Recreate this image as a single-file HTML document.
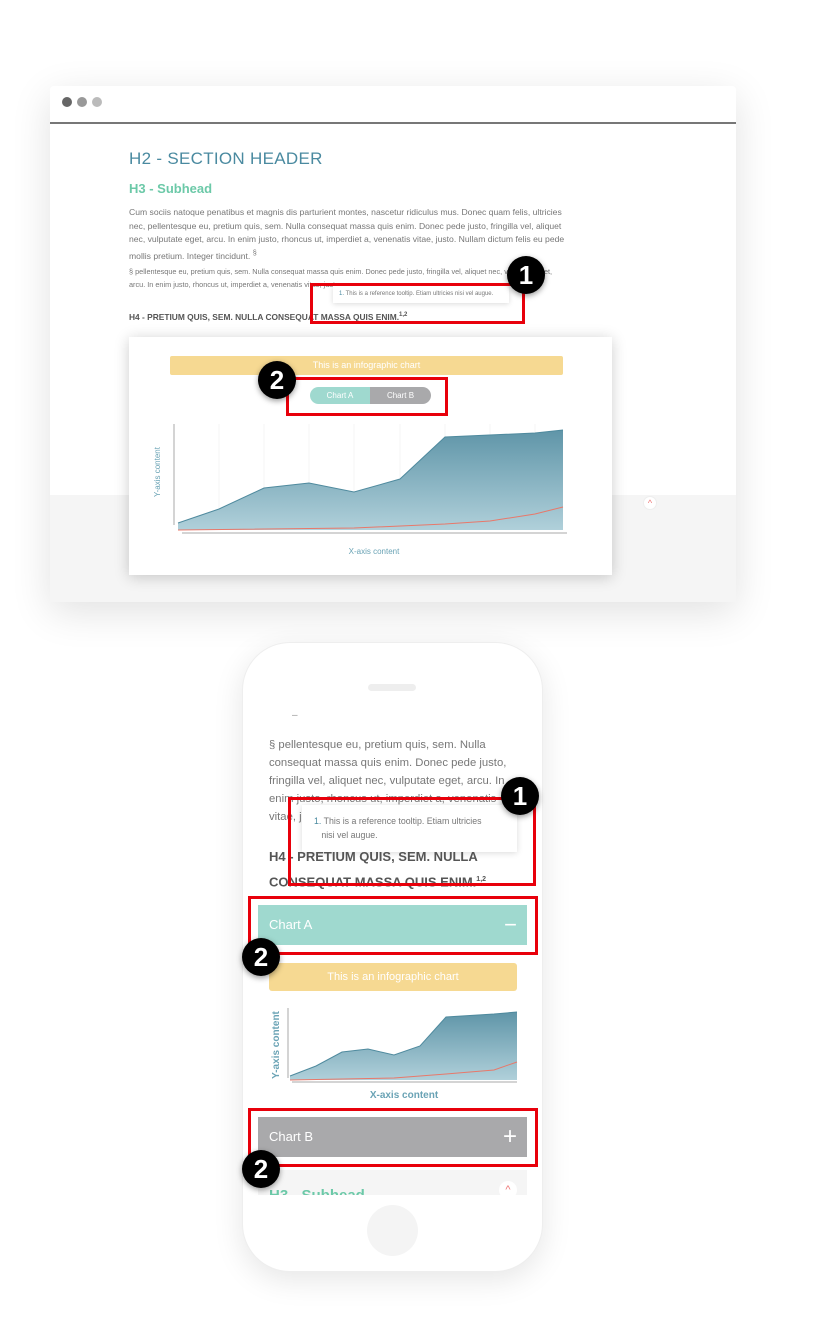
<!DOCTYPE html>
<html><head><meta charset="utf-8"><style>
*{margin:0;padding:0;box-sizing:border-box}
body{width:822px;height:1322px;background:#fff;position:relative;font-family:"Liberation Sans",sans-serif;overflow:hidden}
.a{position:absolute}
.p{color:#777;font-size:8.6px;line-height:13.5px;white-space:nowrap}
.badge{position:absolute;width:38px;height:38px;border-radius:50%;background:#000;color:#fff;font-weight:bold;font-size:26px;text-align:center;line-height:38px;box-shadow:0 2px 6px rgba(0,0,0,.4)}
.red{position:absolute;border:3px solid #e8000b}
</style></head><body>
<div class="a" style="left:50px;top:86px;width:686px;height:516px;background:#fff;box-shadow:0 10px 40px rgba(0,0,0,.12);border-radius:4px 4px 0 0"></div>
<div class="a" style="left:50px;top:122px;width:686px;height:2px;background:#777"></div>
<div class="a" style="left:50px;top:495px;width:686px;height:107px;background:#f5f5f5"></div>
<div class="a" style="left:62px;top:97px;width:10px;height:10px;border-radius:50%;background:#666"></div>
<div class="a" style="left:77px;top:97px;width:10px;height:10px;border-radius:50%;background:#999"></div>
<div class="a" style="left:92px;top:97px;width:10px;height:10px;border-radius:50%;background:#bbb"></div>
<div class="a" style="left:129px;top:149px;font-size:17px;color:#4a8aa0;letter-spacing:.3px">H2 - SECTION HEADER</div>
<div class="a" style="left:129px;top:181px;font-size:13px;color:#6cc9a8;font-weight:bold">H3 - Subhead</div>
<div class="a p" style="left:129px;top:206px">Cum sociis natoque penatibus et magnis dis parturient montes, nascetur ridiculus mus. Donec quam felis, ultricies<br>nec, pellentesque eu, pretium quis, sem. Nulla consequat massa quis enim. Donec pede justo, fringilla vel, aliquet<br>nec, vulputate eget, arcu. In enim justo, rhoncus ut, imperdiet a, venenatis vitae, justo. Nullam dictum felis eu pede<br>mollis pretium. Integer tincidunt. <sup>§</sup></div>
<div class="a p" style="left:129px;top:266px;font-size:7.3px;line-height:12.5px">§ pellentesque eu, pretium quis, sem. Nulla consequat massa quis enim. Donec pede justo, fringilla vel, aliquet nec, vulputate eget,<br>arcu. In enim justo, rhoncus ut, imperdiet a, venenatis vitae, justo.</div>
<div class="a" style="left:333px;top:286px;width:176px;height:17px;background:#fff;box-shadow:0 1px 5px rgba(0,0,0,.15);font-size:6px;color:#777;line-height:17px;padding-left:6px"><span style="color:#4a8aa0">1.</span> This is a reference tooltip. Etiam ultricies nisi vel augue.</div>
<div class="a" style="left:129px;top:312px;font-size:8.4px;font-weight:bold;color:#555">H4 - PRETIUM QUIS, SEM. NULLA CONSEQUAT MASSA QUIS ENIM.<sup style="font-size:6px">1,2</sup></div>
<div class="red" style="left:310px;top:283px;width:215px;height:41px"></div>
<div class="badge" style="left:507px;top:256px">1</div>
<div class="a" style="left:643px;top:496px;width:14px;height:14px;border-radius:50%;background:#fff;border:1px solid #eee;color:#e77;font-size:9px;text-align:center;line-height:13px">^</div>
<div class="a" style="left:129px;top:337px;width:483px;height:238px;background:#fff;box-shadow:0 2px 14px rgba(0,0,0,.2)"></div>
<div class="a" style="left:170px;top:356px;width:393px;height:19px;background:#f6d992;border-radius:2px;color:#fff;font-size:9px;text-align:center;line-height:19px">This is an infographic chart</div>
<div class="a" style="left:310px;top:387px;width:60px;height:17px;background:#9fd9cf;border-radius:9px 0 0 9px;color:#fff;font-size:8px;text-align:center;line-height:17px">Chart A</div>
<div class="a" style="left:370px;top:387px;width:61px;height:17px;background:#a9a9ab;border-radius:0 9px 9px 0;color:#fff;font-size:8px;text-align:center;line-height:17px">Chart B</div>
<div class="red" style="left:286px;top:377px;width:162px;height:39px"></div>
<div class="badge" style="left:258px;top:361px">2</div>
<svg class="a" style="left:0;top:0" width="822" height="1322">
<defs><linearGradient id="g" x1="0" y1="0" x2="0" y2="1"><stop offset="0" stop-color="#5f95a8"/><stop offset="1" stop-color="#b0d0da"/></linearGradient></defs>
<g stroke="#f6f6f6" stroke-width="1">
<line x1="219" y1="424" x2="219" y2="530"/><line x1="264" y1="424" x2="264" y2="530"/><line x1="309" y1="424" x2="309" y2="530"/><line x1="354" y1="424" x2="354" y2="530"/><line x1="400" y1="424" x2="400" y2="530"/><line x1="445" y1="424" x2="445" y2="530"/><line x1="490" y1="424" x2="490" y2="530"/><line x1="535" y1="424" x2="535" y2="530"/></g>
<path d="M178 523 L219 509 L264 488 L309 483 L354 492 L400 479 L445 437 L535 433 L563 430 L563 530 L178 530Z" fill="url(#g)"/>
<path d="M178 523 L219 509 L264 488 L309 483 L354 492 L400 479 L445 437 L535 433 L563 430" fill="none" stroke="#4f8a9e" stroke-width="1"/>
<path d="M178 530 L354 528 L445 524 L490 521 L535 514 L563 507" fill="none" stroke="#e8786a" stroke-width="1"/>
<line x1="174" y1="424" x2="174" y2="525" stroke="#aaa"/>
<line x1="182" y1="533" x2="567" y2="533" stroke="#aaa"/>
<text x="160" y="472" transform="rotate(-90 160 472)" font-size="8" fill="#6aa3b5" text-anchor="middle" font-family="Liberation Sans">Y-axis content</text>
<text x="374" y="554" font-size="8" fill="#6aa3b5" text-anchor="middle" font-family="Liberation Sans">X-axis content</text>
</svg>
<div class="a" style="left:242px;top:642px;width:301px;height:630px;border-radius:48px;background:#fff;box-shadow:0 8px 30px rgba(0,0,0,.1);border:1px solid #eee"></div>
<div class="a" style="left:368px;top:684px;width:48px;height:7px;border-radius:4px;background:#eee"></div>
<div class="a" style="left:367px;top:1205px;width:51px;height:51px;border-radius:50%;background:#f4f4f4"></div>
<div class="a" style="left:258px;top:700px;width:269px;height:495px;background:#fff;overflow:hidden">
 <div class="a" style="left:34px;top:10px;font-size:10px;color:#999">–</div>
 <div class="a" style="left:11px;top:36px;font-size:11.3px;line-height:18px;color:#777;white-space:nowrap">§ pellentesque eu, pretium quis, sem. Nulla<br>consequat massa quis enim. Donec pede justo,<br>fringilla vel, aliquet nec, vulputate eget, arcu. In<br>enim justo, rhoncus ut, imperdiet a, venenatis<br>vitae, justo.</div>
 <div class="a" style="left:44px;top:105px;width:215px;height:47px;background:#fff;box-shadow:0 1px 6px rgba(0,0,0,.15);font-size:8.8px;line-height:14px;color:#777;padding:9px 8px 0 12px;white-space:nowrap"><span style="color:#4a8aa0">1.</span> This is a reference tooltip. Etiam ultricies<br>&nbsp;&nbsp;&nbsp;nisi vel augue.</div>
 <div class="a" style="left:11px;top:145px;width:258px;font-size:13px;line-height:23px;font-weight:bold;color:#555">H4 - PRETIUM QUIS, SEM. NULLA CONSEQUAT MASSA QUIS ENIM.<sup style="font-size:7px">1,2</sup></div>
 <div class="a" style="left:0;top:205px;width:269px;height:40px;background:#9fd9cf;color:#fff;font-size:13px;line-height:40px;padding-left:11px">Chart A<span style="position:absolute;right:10px;top:0;font-size:22px">−</span></div>
 <div class="a" style="left:11px;top:263px;width:248px;height:28px;background:#f6d992;border-radius:3px;color:#fff;font-size:11px;text-align:center;line-height:28px">This is an infographic chart</div>
 <div class="a" style="left:0;top:417px;width:269px;height:40px;background:#a9a9ab;color:#fff;font-size:13px;line-height:40px;padding-left:11px">Chart B<span style="position:absolute;right:10px;top:0;font-size:24px">+</span></div>
 <div class="a" style="left:0;top:470px;width:269px;height:30px;background:#f5f5f5"></div>
 <div class="a" style="left:11px;top:487px;font-size:15px;font-weight:bold;color:#6cc9a8">H3 - Subhead</div>
 <div class="a" style="left:241px;top:481px;width:18px;height:18px;border-radius:50%;background:#fff;color:#e77;font-size:11px;text-align:center;line-height:18px">^</div>
</div>
<svg class="a" style="left:0;top:0" width="822" height="1322">
<defs><linearGradient id="g2" x1="0" y1="0" x2="0" y2="1"><stop offset="0" stop-color="#5f95a8"/><stop offset="1" stop-color="#b0d0da"/></linearGradient></defs>
<path d="M290 1076 L316 1066 L342 1052 L368 1049 L394 1055 L420 1046 L446 1017 L494 1014 L517 1012 L517 1080 L290 1080Z" fill="url(#g2)"/>
<path d="M290 1076 L316 1066 L342 1052 L368 1049 L394 1055 L420 1046 L446 1017 L494 1014 L517 1012" fill="none" stroke="#4f8a9e" stroke-width="1"/>
<path d="M290 1080 L394 1078 L446 1074 L494 1070 L517 1062" fill="none" stroke="#e8786a" stroke-width="1"/>
<line x1="288" y1="1008" x2="288" y2="1078" stroke="#aaa"/>
<line x1="292" y1="1082" x2="517" y2="1082" stroke="#aaa"/>
<text x="279" y="1045" transform="rotate(-90 279 1045)" font-size="10" font-weight="bold" fill="#6aa3b5" text-anchor="middle" font-family="Liberation Sans">Y-axis content</text>
<text x="404" y="1098" font-size="10" font-weight="bold" fill="#6aa3b5" text-anchor="middle" font-family="Liberation Sans">X-axis content</text>
</svg>
<div class="red" style="left:288px;top:797px;width:248px;height:89px"></div>
<div class="badge" style="left:501px;top:777px">1</div>
<div class="red" style="left:248px;top:896px;width:290px;height:59px"></div>
<div class="badge" style="left:242px;top:938px">2</div>
<div class="red" style="left:248px;top:1108px;width:290px;height:59px"></div>
<div class="badge" style="left:242px;top:1150px">2</div>
</body></html>
